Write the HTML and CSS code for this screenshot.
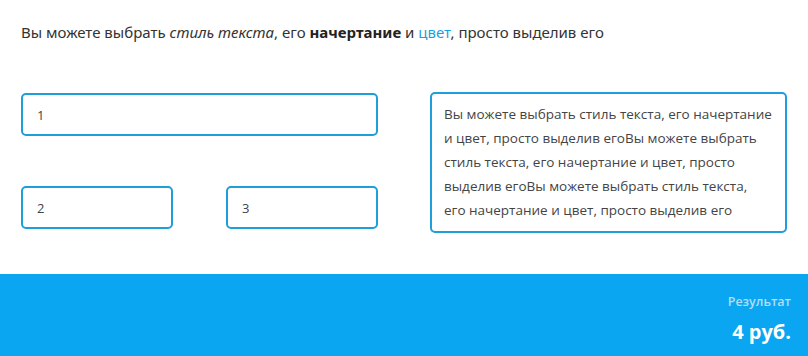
FILE: index.html
```html
<!DOCTYPE html>
<html lang="ru">
<head>
<meta charset="utf-8">
<link rel="stylesheet" href="styles.css">
</head>
<body>
<div class="page">
  <p class="intro">Вы можете выбрать <em>стиль текста</em>, его <strong>начертание</strong> и <span class="link">цвет</span>, просто выделив его</p>
  <div class="work">
    <div class="left">
      <div class="field wide">1</div>
      <div class="row">
        <div class="field">2</div>
        <div class="field">3</div>
      </div>
    </div>
    <div class="note">Вы можете выбрать стиль текста, его начертание и цвет, просто выделив егоВы можете выбрать стиль текста, его начертание и цвет, просто выделив егоВы можете выбрать стиль текста, его начертание и цвет, просто выделив его</div>
  </div>
</div>
<footer class="result">
  <div class="label">Результат</div>
  <div class="sum">4 руб.</div>
</footer>
</body>
</html>
```
FILE: styles.css
```css
html, body {
  margin: 0;
  padding: 0;
  background: #fff;
}
body {
  font-family: "Open Sans", "Noto Sans", sans-serif;
  color: #333;
  width: 808px;
  height: 356px;
  overflow: hidden;
}
.page {
  height: 274px;
  box-sizing: border-box;
  padding: 0 21px;
}
.intro {
  margin: 0;
  padding-top: 22px;
  font-family: "Noto Sans", sans-serif;
  font-size: 15px;
  line-height: 20px;
  color: #333;
}
.intro strong { font-weight: 700; color: #222; }
.intro .link { color: #1e9fdc; }
.work {
  display: flex;
  justify-content: space-between;
  margin-top: 51px;
}
.left {
  width: 357px;
  display: flex;
  flex-direction: column;
  gap: 50px;
}
.row {
  display: flex;
  justify-content: space-between;
}
.field {
  box-sizing: border-box;
  width: 152px;
  height: 43px;
  border: 2px solid #1e9fdc;
  border-radius: 5px;
  padding: 0 14px;
  display: flex;
  align-items: center;
  font-size: 13px;
  color: #444;
}
.field.wide {
  width: 357px;
}
.note {
  box-sizing: border-box;
  width: 357px;
  height: 141px;
  margin-top: -1px;
  border: 2px solid #1e9fdc;
  border-radius: 5px;
  padding: 8px 13px 8px 12px;
  font-size: 13.5px;
  line-height: 24px;
  color: #444;
}
.result {
  height: 82px;
  background: #0aa6f2;
  box-sizing: border-box;
  padding: 20px 17px 0 0;
  text-align: right;
}
.label {
  font-size: 12.5px;
  font-weight: 600;
  color: #b0def8;
  line-height: 16px;
}
.sum {
  margin-top: 10px;
  font-size: 20px;
  font-weight: 700;
  color: #fff;
  line-height: 24px;
}
```
